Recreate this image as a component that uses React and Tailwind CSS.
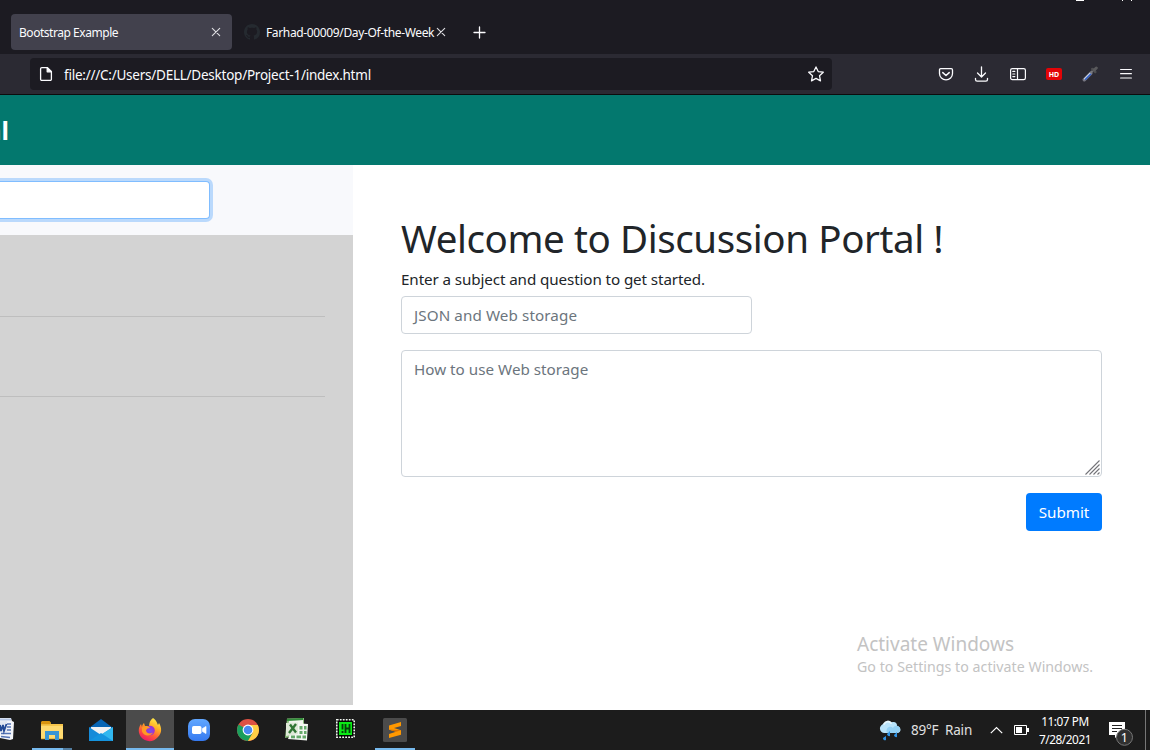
import React from "react";

function GithubMark() {
  return (
    <svg className="h-4 w-4 shrink-0" viewBox="0 0 16 16" fill="#252a30">
      <path d="M8 0C3.58 0 0 3.58 0 8c0 3.54 2.29 6.53 5.47 7.59.4.07.55-.17.55-.38 0-.19-.01-.82-.01-1.49-2.01.37-2.53-.49-2.69-.94-.09-.23-.48-.94-.82-1.13-.28-.15-.68-.52-.01-.53.63-.01 1.08.58 1.23.82.72 1.21 1.87.87 2.33.66.07-.52.28-.87.51-1.07-1.78-.2-3.64-.89-3.64-3.95 0-.87.31-1.59.82-2.15-.08-.2-.36-1.02.08-2.12 0 0 .67-.21 2.2.82.64-.18 1.32-.27 2-.27s1.36.09 2 .27c1.53-1.04 2.2-.82 2.2-.82.44 1.1.16 1.92.08 2.12.51.56.82 1.27.82 2.15 0 3.07-1.87 3.75-3.65 3.95.29.25.54.73.54 1.48 0 1.07-.01 1.93-.01 2.2 0 .21.15.46.55.38A8.01 8.01 0 0016 8c0-4.42-3.58-8-8-8z" />
    </svg>
  );
}

function CloseIcon() {
  return (
    <svg className="h-[10px] w-[10px] shrink-0" viewBox="0 0 10 10" stroke="#dedee2" strokeWidth="1.1" strokeLinecap="round">
      <path d="M1.3 1.3l7.4 7.4M8.7 1.3L1.3 8.7" />
    </svg>
  );
}

function TabStrip() {
  return (
    <div className="relative flex h-[54px] items-start bg-[#1c1b22] pl-[11px] pt-[14px] text-[12px] text-[#fbfbfe]">
      <div className="flex h-9 w-[221px] items-center justify-between rounded-[4px] bg-[#42414d] pl-2 pr-[11px]">
        <span className="whitespace-nowrap pt-[2px] tracking-[-0.46px]">Bootstrap Example</span>
        <CloseIcon />
      </div>
      <div className="flex h-9 w-[214px] items-center pl-3">
        <GithubMark />
        <span className="ml-[6px] w-[170px] shrink-0 whitespace-nowrap pt-[2px] tracking-[-0.36px]">Farhad-00009/Day-Of-the-Week</span>
        <CloseIcon />
      </div>
      <svg className="ml-[27px] mt-3 h-[13px] w-[13px]" viewBox="0 0 13 13" stroke="#fbfbfe" strokeWidth="1.3" strokeLinecap="round">
        <path d="M6.5 1v11M1 6.5h11" />
      </svg>
      <svg className="absolute right-0 top-0 h-1 w-[90px]" viewBox="0 0 90 4" fill="#fff">
        <path d="M16 0h8v1h-8zM62 0h1v1h-1zM71 0h1v1h-1z" />
      </svg>
    </div>
  );
}

function ToolbarIcons() {
  return (
    <div className="flex items-center gap-5" aria-hidden="true">
      <svg className="h-4 w-4" viewBox="0 0 16 16" fill="none" stroke="#fbfbfe" strokeWidth="1.3" strokeLinecap="round" strokeLinejoin="round">
        <path d="M2.7 2.7h10.6a1.2 1.2 0 011.2 1.2v3.6a6.5 6.3 0 01-13 0V3.9a1.2 1.2 0 011.2-1.2z" />
        <path d="M4.8 6.6L8 9.5l3.2-2.9" strokeWidth="1.5" />
      </svg>
      <svg className="h-4 w-4" viewBox="0 0 16 16" fill="none" stroke="#fbfbfe" strokeWidth="1.3" strokeLinecap="round" strokeLinejoin="round">
        <path d="M7.5 .8v10M3.5 7l4 4 4-4M1.5 12.3v1.2a1.6 1.6 0 001.6 1.6h8.8a1.6 1.6 0 001.6-1.6v-1.2" />
      </svg>
      <svg className="h-4 w-4" viewBox="0 0 16 16" fill="none" stroke="#fbfbfe" strokeWidth="1.2" strokeLinecap="round">
        <rect x=".6" y="2.6" width="14.8" height="11" rx="1.7" />
        <path d="M7.5 2.8v10.7M2.8 5.4h2M2.8 8h2M2.8 10.6h2" />
      </svg>
      <span className="flex h-3 w-4 items-center justify-center rounded-[2px] bg-[#e30407] text-[7px] font-bold leading-none text-white">HD</span>
      <svg className="h-4 w-4" viewBox="0 0 16 16" fill="none" strokeLinecap="round">
        <path d="M2.3 13.7l6.5-6.5" stroke="#777783" strokeWidth="3.4" />
        <path d="M2.8 12.7l6-6" stroke="#cddcf2" strokeWidth="1.6" />
        <path d="M3.6 13.2l5-5" stroke="#315fc8" strokeWidth="1.6" />
        <path d="M9 6.5l3-3" stroke="#77777c" strokeWidth="2" />
        <path d="M10.3 3l3 3" stroke="#4d4d50" strokeWidth="2.5" />
        <path d="M12.3 4l2-2" stroke="#59595c" strokeWidth="3" />
      </svg>
      <svg className="h-4 w-4" viewBox="0 0 16 16" stroke="#fbfbfe" strokeWidth="1.2" strokeLinecap="round">
        <path d="M2.6 3.5h10.8M2.6 7.7h10.8M2.6 12h10.8" />
      </svg>
    </div>
  );
}

function AddressBar() {
  return (
    <div className="flex h-[41px] items-center justify-between border-b border-[#0c0c0d] bg-[#2b2a33] pl-[30px] pr-4">
      <div className="flex h-8 w-[802px] items-center rounded-[4px] bg-[#1c1b22] pl-[8px] pr-2">
        <svg className="h-4 w-4 shrink-0" viewBox="0 0 16 16" fill="none" stroke="#fbfbfe" strokeWidth="1.3" strokeLinejoin="round">
          <path d="M3.8 1.6h5.6l4 4v7.6a1.2 1.2 0 01-1.2 1.2H3.8a1.2 1.2 0 01-1.2-1.2V2.8a1.2 1.2 0 011.2-1.2z" />
          <path d="M9.2 1.6v4.2h4.2z" fill="#fbfbfe" />
        </svg>
        <span className="ml-[10px] flex-1 whitespace-nowrap pt-[2px] text-[13.5px] leading-5 tracking-[-0.24px] text-[#fbfbfe]">file:///C:/Users/DELL/Desktop/Project-1/index.html</span>
        <svg className="h-4 w-4 shrink-0" viewBox="0 0 16 16" fill="none" stroke="#fbfbfe" strokeWidth="1.25" strokeLinejoin="round">
          <path d="M8 .9l2.2 4.7 5.1.6-3.8 3.5 1 5.2L8 12.4l-4.5 2.5 1-5.2L.7 6.2l5.1-.6z" />
        </svg>
      </div>
      <ToolbarIcons />
    </div>
  );
}

function QuestionPanel() {
  return (
    <aside className="flex w-[353px] shrink-0 flex-col">
      <div className="h-[70px] bg-[#f8f9fc] pt-4">
        <div className="h-[38px] w-[210px] rounded-r-[4px] border border-l-0 border-[#80bdff] bg-white shadow-[0_0_0_3px_#bad9fc]" />
      </div>
      <div className="flex-1 bg-[#d3d3d3]">
        <div className="h-[82px] w-[325px] border-b border-[#bebebe]" />
        <div className="h-20 w-[325px] border-b border-[#bebebe]" />
      </div>
    </aside>
  );
}

function DiscussionForm() {
  return (
    <main className="flex flex-1 flex-col pl-12 pr-12 pt-[49px] text-[#212529]">
      <h1 className="h-12 whitespace-nowrap text-[38.5px] leading-[48px] tracking-[-0.4px]">Welcome to Discussion Portal !</h1>
      <p className="mt-[5px] h-6 whitespace-nowrap text-[15.2px] leading-6 tracking-[-0.1px]">Enter a subject and question to get started.</p>
      <div className="mt-[5px] h-[38px] w-[351px] rounded-[4px] border border-[#ced4da] px-3 text-[15.2px] leading-[37px] tracking-[0.1px] text-[#6c757d]">JSON and Web storage</div>
      <div className="mt-4 flex h-[127px] w-[701px] justify-between rounded-[4px] border border-[#ced4da] pl-3 text-[15.2px] leading-[37px] tracking-[0.02px] text-[#6c757d]">
        <span>How to use Web storage</span>
        <svg className="mb-[1px] mr-[1px] h-[15px] w-[15px] self-end" viewBox="0 0 15 15" stroke="#737378" strokeWidth="1.1">
          <path d="M.5 14.5l14-14M4.5 14.5l10-10M8.5 14.5l6-6M12.5 14.5l2-2" />
        </svg>
      </div>
      <button className="mt-4 h-[38px] w-[76px] self-end rounded-[4px] bg-[#007bff] text-[15.2px] leading-[38px] text-white">Submit</button>
      <div className="mt-[101px] ml-[456px] whitespace-nowrap text-[#c3c3c3]">
        <div className="h-6 text-[19px] leading-6">Activate Windows</div>
        <div className="mt-px h-5 text-[14.2px] leading-5 tracking-[0.03px]">Go to Settings to activate Windows.</div>
      </div>
    </main>
  );
}

function TaskCell({ children, active }) {
  return (
    <div className={active ? "h-10 w-12 shrink-0 bg-[#4b4b4b]" : "h-10 w-12 shrink-0"}>
      <svg className="h-10 w-12" viewBox="0 0 48 40">{children}</svg>
    </div>
  );
}

function TaskbarApps() {
  return (
    <div className="flex gap-px">
      <div className="h-10 w-[27px]">
        <svg className="h-10 w-[27px]" viewBox="0 0 27 40">
          <path d="M0 8h11l1 3 2 1-1 17-3 1-10-2z" fill="#f3f5fa" />
          <path d="M0 8.5h11v2H0z" fill="#b5c6e6" />
          <path d="M7 14h4M7 17h4M7 20h4M1 23.5h10M1 26.5l9 1" stroke="#5574b5" strokeWidth="1.4" />
          <path d="M0 11.5l7-.5v11H0z" fill="#e3e8f2" />
          <path d="M0 15l1 6 2-6 1 6 2.5-7" fill="none" stroke="#234a96" strokeWidth="1.8" />
        </svg>
      </div>
      <TaskCell>
        <path d="M13 12h9l1 2h12v15H13z" fill="#f6c54b" />
        <path d="M14 11h7.5l1.5 1.5-1.2 1.7H13V12z" fill="#d99410" />
        <path d="M13 16h22v13H13z" fill="#ffda70" />
        <path d="M13 28h22v1.5H13z" fill="#d9a62f" opacity=".55" />
        <path d="M17 21h14v9h-4v-5h-6v5h-4z" fill="#3795d5" />
        <path d="M4 38h31v2H4z" fill="#76b9ed" /><path d="M35 38h9v2h-9z" fill="#527da0" />
      </TaskCell>
      <TaskCell>
        <path d="M12 18L24 9l12 9v5H12z" fill="#0865b4" />
        <path d="M14 17h20v8L24 30l-10-5z" fill="#f2f2f3" />
        <path d="M12 17l12 8 12-8v14H12z" fill="#168bd9" />
        <path d="M36 17v14H14z" fill="#31b7ef" />
        <path d="M12 31l12-8 12 8z" fill="#1594df" />
      </TaskCell>
      <TaskCell active>
        <defs>
          <linearGradient id="flame" x1=".8" y1="0" x2=".3" y2="1"><stop offset="0" stopColor="#fff44f" /><stop offset=".38" stopColor="#ffad24" /><stop offset=".7" stopColor="#ff543c" /><stop offset="1" stopColor="#ee1768" /></linearGradient>
          <radialGradient id="globe"><stop offset="0" stopColor="#7653e8" /><stop offset="1" stopColor="#a32bd0" /></radialGradient>
        </defs>
        <path d="M27 8c4 3 4 5 5 7l1-2c3 5 3 10-1 14-5 6-13 5-17 0-3-4-3-9 0-13l1 3c0-2 1-3 2-4l1 3 4 1c0-4 1-7 4-9z" fill="url(#flame)" />
        <circle cx="24" cy="20.5" r="4.8" fill="url(#globe)" />
        <path d="M16 17.5c3-2 6-2 8 .5-2 0-3.500 .8-4 2.500.5 3 4 4 7 2-2 4-9 4.500-11-1z" fill="#ff9a24" />
        <path d="M0 38h48v2H0z" fill="#76b9ed" />
      </TaskCell>
      <TaskCell>
        <defs><linearGradient id="camera" y2="1" x2="0"><stop stopColor="#61a7ff" /><stop offset="1" stopColor="#3579f0" /></linearGradient></defs>
        <rect x="13" y="9" width="22" height="22" rx="7" fill="url(#camera)" />
        <rect x="17" y="16" width="9.5" height="8" rx="1.7" fill="white" />
        <path d="M27.5 18.5l3.5-2v7l-3.5-2z" fill="white" stroke="white" strokeWidth=".7" strokeLinejoin="round" />
      </TaskCell>
      <TaskCell>
        <circle cx="24" cy="20" r="11" fill="#dd5144" />
        <path d="M24 20L14.5 14.5A11 11 0 0024 31l4.8-8.2z" fill="#1a9e5c" />
        <path d="M24 15h9.8A11 11 0 0124 31l4.8-8.2z" fill="#ffce45" />
        <circle cx="24" cy="20" r="5.4" fill="#fff" /><circle cx="24" cy="20" r="4.3" fill="#4989f2" />
      </TaskCell>
      <TaskCell>
        <path d="M14 8.500l17-.5v16l-19 4z" fill="#8bbd7c" />
        <path d="M16 10.500l14-.5v13l-15 1z" fill="#f3f6ef" />
        <path d="M21 13l14 1-1 16.500-19-1.500z" fill="#f5f7f3" />
        <path d="M26.500 16h3v3.500h-3zm4.500 0h2.500v3.500h-2.500zM26.500 21h3v3h-3zm4.500 0h2.500v3h-2.500zM18 25.500h4v2.700h-4zm5.500 0h4.500v2.700h-4.500zm6 0H33v3h-3.500z" fill="#66a96b" />
        <path d="M13 13l12-.5v11.500l-12 2z" fill="#dfe9d8" />
        <path d="M17 14.500l6 8M23 14L16 23" stroke="#317534" strokeWidth="2.4" />
        <path d="M14 10l16-1" stroke="#318b3a" strokeWidth="2" />
      </TaskCell>
      <TaskCell>
        <rect x="14.800" y="9.800" width="17.400" height="17.400" fill="#030803" stroke="#f1f5f1" strokeWidth="1.6" strokeDasharray="1.8 1.2" />
        <rect x="16" y="11" width="15" height="15" fill="#030803" />
        <rect x="17" y="12" width="13" height="13" fill="#0bea16" />
        <path d="M20.500 14v5.500M20.500 21v2M23.500 14v9M23.500 18.500h4M27.500 14v9" stroke="#063e0a" strokeWidth="1.8" />
      </TaskCell>
      <TaskCell>
        <rect x="12" y="8" width="24" height="24" rx="1.5" fill="#4b4b4b" />
        <path d="M30 12v4l-7 2 7 2.2v4.6L18 28v-4l7-2.3-7-2V15.5z" fill="#ff9800" />
        <path d="M18 19.5l12 .7-5 1.5z" fill="#d87000" />
        <path d="M4 38h40v2H4z" fill="#76b9ed" />
      </TaskCell>
    </div>
  );
}

function Taskbar() {
  return (
    <footer className="flex h-10 items-center bg-[#1c1c1c] text-white">
      <TaskbarApps />
      <div className="ml-auto flex h-10 items-center">
        <svg className="h-6 w-6" viewBox="0 0 24 24">
          <path d="M5.5 15a4.5 4.5 0 01-.2-9C7 2.500 10 2 12.500 4.500 16 3 18.500 5.500 18 8c5 1 4.500 7 0 7z" fill="#b9e4fb" />
          <path d="M8 15c-2-5 3-8 6-5 2-4 8-2 7 2-.5 2-1.500 3-3 3z" fill="#94d1f5" />
          <path d="M5 6c2-3 5-3 7-1" fill="none" stroke="#e5f7ff" strokeWidth="2" strokeLinecap="round" />
          <path d="M11 13l-3 3a2.200 2.200 0 003 2zM18 14l-3 3a2.200 2.200 0 003 2zM7 18l-3 2a2 2 0 003 2z" fill="#2f93e5" />
        </svg>
        <span className="ml-[8px] w-[62px] whitespace-nowrap pt-px text-[13.5px] tracking-[-0.2px] text-[#e0e0e0]">89°F&nbsp; Rain</span>
        <svg className="ml-[17px] h-2 w-[13px]" viewBox="0 0 13 8" fill="none" stroke="#fff" strokeWidth="1.2"><path d="M.8 7.2l5.7-5.7 5.7 5.7" /></svg>
        <svg className="ml-[11px] h-[10px] w-[15px]" viewBox="0 0 15 10"><path d="M.5.5h12v9H.5z" fill="none" stroke="white" /><path d="M2 2h6v6H2zM13 3h2v4h-2z" fill="white" /></svg>
        <div className="ml-[8px] w-[56px] whitespace-nowrap text-center text-[11.8px] leading-[18px] tracking-[-0.45px]"><div>11:07 PM</div><div>7/28/2021</div></div>
        <svg className="ml-[15px] h-10 w-[26px]" viewBox="0 0 26 40">
          <path d="M1 12h16v13h-6l-4 3v-3H1z" fill="white" />
          <path d="M4 15.500h10M4 18.500h10M4 21.500h5" stroke="#222" />
          <circle cx="16.500" cy="27.300" r="8" fill="#303030" stroke="#777" />
          <text x="16.300" y="31.500" textAnchor="middle" fill="white" fontSize="12.5">1</text>
        </svg>
        <span className="ml-[11px] mr-1 h-10 w-px bg-[#777]" />
      </div>
    </footer>
  );
}

export default function App() {
  return (
    <div className="flex h-[750px] w-[1150px] flex-col overflow-hidden bg-white font-['Noto_Sans','Open_Sans',sans-serif]">
      <TabStrip />
      <AddressBar />
      <header className="flex h-[70px] items-center overflow-hidden bg-[#03786e]">
        <div className="flex w-[9px] justify-end whitespace-nowrap text-[25px] font-bold leading-8 text-white"><span>al</span></div>
      </header>
      <section className="flex h-[540px]">
        <QuestionPanel />
        <DiscussionForm />
      </section>
      <div className="h-[5px] bg-white" />
      <Taskbar />
    </div>
  );
}
